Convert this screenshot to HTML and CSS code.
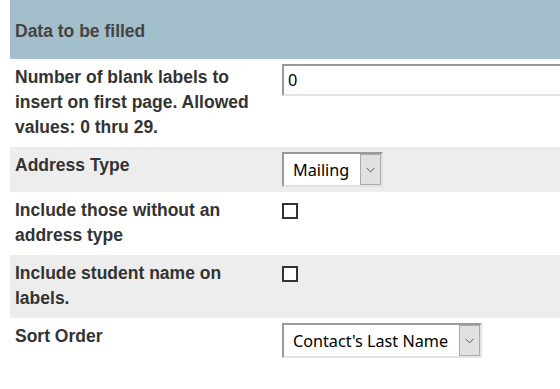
FILE: index.html
```html
<!DOCTYPE html>
<html>
<head>
<meta charset="utf-8">
<title>Data to be filled</title>
<link rel="stylesheet" href="styles.css">
</head>
<body>
<div class="form">
  <div class="head">Data to be filled</div>
  <div class="row">
    <div class="label">Number of blank labels to insert on first page. Allowed values: 0 thru 29.</div>
    <div class="ctrl"><input class="text" type="text" value="0"></div>
  </div>
  <div class="row alt">
    <div class="label">Address Type</div>
    <div class="ctrl">
      <span class="select"><select><option>Mailing</option><option>Home</option></select><span class="btn"><svg width="9" height="6" viewBox="0 0 9 6"><path d="M0.5 0.8 L4.5 4.8 L8.5 0.8" fill="none" stroke="#555" stroke-width="1"/></svg></span></span>
    </div>
  </div>
  <div class="row">
    <div class="label">Include those without an address type</div>
    <div class="ctrl"><input class="check" type="checkbox"></div>
  </div>
  <div class="row alt">
    <div class="label">Include student name on labels.</div>
    <div class="ctrl"><input class="check" type="checkbox"></div>
  </div>
  <div class="row">
    <div class="label">Sort Order</div>
    <div class="ctrl">
      <span class="select"><select><option>Contact's Last Name</option><option>Zip Code</option></select><span class="btn"><svg width="9" height="6" viewBox="0 0 9 6"><path d="M0.5 0.8 L4.5 4.8 L8.5 0.8" fill="none" stroke="#555" stroke-width="1"/></svg></span></span>
    </div>
  </div>
</div>
</body>
</html>
```
FILE: styles.css
```css
html, body {
  margin: 0;
  background: #fff;
  overflow: hidden;
}
body {
  font-family: "Liberation Sans", Arial, sans-serif;
}
.form {
  margin-left: 10px;
}
.head {
  background: #a3bfcc;
  color: #444;
  font-weight: bold;
  font-size: 17.5px;
  line-height: 25px;
  padding: 19px 5px 15px;
}
.row {
  display: grid;
  grid-template-columns: 267px minmax(0, 1fr);
}
.row.alt {
  background: #ededed;
}
.label {
  padding: 6px 6px 7px 5px;
  font-weight: bold;
  font-size: 17.5px;
  line-height: 25px;
  color: #333;
}
.ctrl {
  padding: 5px 0 5px 5px;
  overflow: hidden;
  min-width: 0;
}
.text {
  display: block;
  box-sizing: border-box;
  width: 320px;
  height: 32px;
  margin: 0;
  border: 2px solid;
  border-color: #9a9a9a #e3e3e3 #e3e3e3 #9a9a9a;
  padding: 0 5px 0 4px;
  font: 16.3px "Noto Sans", sans-serif;
  color: #000;
  background: #fff;
  outline: none;
}
.select {
  display: inline-flex;
  box-sizing: border-box;
  height: 35px;
  border: 2px solid;
  border-color: #9a9a9a #e3e3e3 #e3e3e3 #9a9a9a;
  background: #fff;
  vertical-align: top;
}
.select select {
  appearance: none;
  -webkit-appearance: none;
  border: 0;
  margin: 0;
  background: transparent;
  font: 16.2px "Noto Sans", sans-serif;
  color: #000;
  padding: 0 10px 0 9px;
  outline: none;
}
.btn {
  box-sizing: border-box;
  width: 21px;
  border: 1px solid #ababab;
  background: #e1e1e1;
  display: flex;
  align-items: center;
  justify-content: center;
}
.check {
  appearance: none;
  -webkit-appearance: none;
  display: block;
  box-sizing: border-box;
  width: 16px;
  height: 16px;
  margin: 6px 0 0;
  border: 2px solid #333;
  background: #fff;
}
```
